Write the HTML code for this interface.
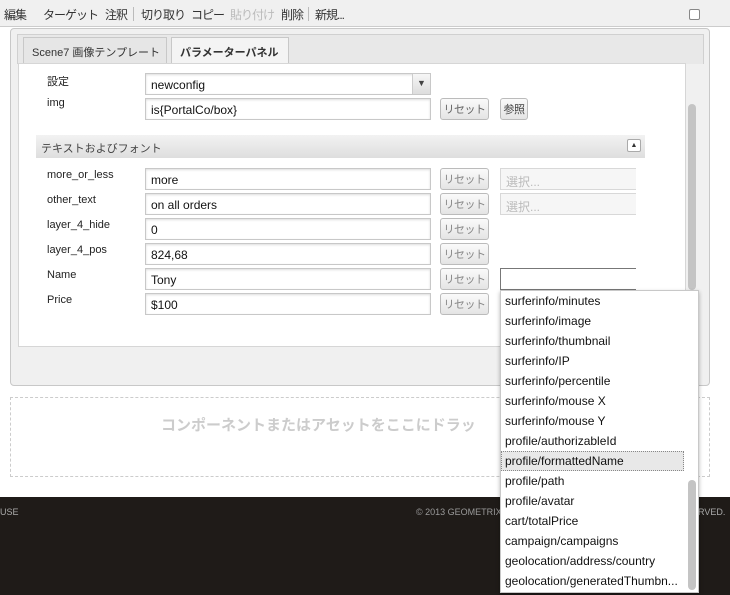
<!DOCTYPE html>
<html><head><meta charset="utf-8"><style>
*{box-sizing:border-box;margin:0;padding:0}
body{width:730px;height:595px;position:relative;overflow:hidden;background:#fff;font-family:"Liberation Sans","Noto Sans CJK JP",sans-serif;font-size:12px;color:#333}
.a{position:absolute}
.tb{left:0;top:0;width:730px;height:27px;background:#f0f0f0;border-bottom:1px solid #ccc}
.tb span{position:absolute;top:6px;font-size:12px;color:#333;white-space:nowrap;letter-spacing:-1px}
.sep{position:absolute;top:7px;width:1px;height:14px;background:#bbb}
.panel{left:10px;top:28px;width:700px;height:358px;background:#f0f0f0;border:1px solid #c8c8c8;border-radius:4px}
.tabbar{left:17px;top:34px;width:687px;height:30px;background:#e8e8e8;border:1px solid #d0d0d0;border-bottom:none}
.tab{top:37px;height:26px;border:1px solid #c8c8c8;border-bottom:none;background:#e6e6e6;font-size:11px;padding:6px 0 0 8px;color:#333;white-space:nowrap;overflow:hidden}
.content{left:18px;top:63px;width:668px;height:284px;background:#fff;border:1px solid #d6d6d6}
.lbl{left:47px;font-size:11px;color:#222}
.inp{left:145px;width:286px;height:22px;border:1px solid #c8c8c8;background:#fff;font-size:12px;padding:4px 5px;color:#111;box-shadow:inset 0 1px 2px #ddd}
.btn{left:440px;width:49px;height:22px;border:1px solid #bbb;border-radius:3px;background:linear-gradient(#fafafa,#e4e4e4);font-size:11px;color:#888;text-align:center;line-height:22px;white-space:nowrap;overflow:hidden;letter-spacing:-0.5px}
.sel{left:500px;width:136px;height:22px;border:1px solid #d8d8d8;border-right:none;background:#f6f6f6;color:#bbb;font-size:12px;padding:4px 5px}
.dd{left:500px;top:290px;width:199px;height:303px;background:#fff;border:1px solid #c8c8c8;box-shadow:0 2px 4px rgba(0,0,0,.3)}
.dd div{height:20px;padding:3px 0 0 4px;font-size:12px;color:#111;white-space:nowrap}
.footer{left:0;top:497px;width:730px;height:98px;background:#1f1b18}
</style></head><body>
<div class="a tb">
<span style="left:4px">編集</span><span style="left:43px">ターゲット</span><span style="left:105px">注釈</span>
<div class="sep" style="left:133px"></div>
<span style="left:141px">切り取り</span><span style="left:191px">コピー</span><span style="left:230px;color:#bbb">貼り付け</span><span style="left:281px">削除</span>
<div class="sep" style="left:308px"></div>
<span style="left:315px">新規...</span>
<div class="a" style="left:689px;top:9px;width:11px;height:11px;border:1px solid #888;border-radius:2px;background:#fff"></div>
</div>
<div class="a panel"></div>
<div class="a tabbar"></div>
<div class="a tab" style="left:23px;width:144px">Scene7 画像テンプレート</div>
<div class="a tab" style="left:171px;width:118px;background:#f4f4f4;font-weight:bold;height:27px">パラメーターパネル</div>
<div class="a content"></div>
<div class="a" style="left:686px;top:64px;width:12px;height:283px;background:#f0f0f0"></div>
<div class="a" style="left:688px;top:104px;width:8px;height:186px;background:#c4c4c4;border-radius:4px"></div>

<div class="a lbl" style="top:73px">設定</div>
<div class="a inp" style="top:73px;width:286px">newconfig</div>
<div class="a" style="left:412px;top:74px;width:18px;height:20px;background:linear-gradient(#f6f6f6,#ddd);border-left:1px solid #ccc;font-size:9px;text-align:center;padding-top:4px;color:#444">&#9660;</div>
<div class="a lbl" style="top:97px">img</div>
<div class="a inp" style="top:98px">is{PortalCo/box}</div>
<div class="a btn" style="top:98px;color:#666">リセット</div>
<div class="a btn" style="left:500px;width:28px;top:98px;color:#444">参照</div>

<div class="a" style="left:36px;top:135px;width:609px;height:23px;background:linear-gradient(#f2f2f2,#dedede);font-size:11px;padding:5px 5px;color:#444">テキストおよびフォント</div>
<div class="a" style="left:627px;top:139px;width:14px;height:13px;border:1px solid #aaa;border-radius:2px;background:#fff;font-size:7px;text-align:center;padding-top:2px;color:#333">&#9650;</div>

<div class="a lbl" style="top:169px">more_or_less</div>
<div class="a inp" style="top:168px">more</div><div class="a btn" style="top:168px">リセット</div><div class="a sel" style="top:168px">選択...</div>
<div class="a lbl" style="top:194px">other_text</div>
<div class="a inp" style="top:193px">on all orders</div><div class="a btn" style="top:193px">リセット</div><div class="a sel" style="top:193px">選択...</div>
<div class="a lbl" style="top:219px">layer_4_hide</div>
<div class="a inp" style="top:218px">0</div><div class="a btn" style="top:218px">リセット</div>
<div class="a lbl" style="top:244px">layer_4_pos</div>
<div class="a inp" style="top:243px">824,68</div><div class="a btn" style="top:243px">リセット</div>
<div class="a lbl" style="top:269px">Name</div>
<div class="a inp" style="top:268px">Tony</div><div class="a btn" style="top:268px">リセット</div>
<div class="a" style="left:500px;top:268px;width:136px;height:22px;border:1px solid #777;border-right:none;background:#fff"></div>
<div class="a lbl" style="top:294px">Price</div>
<div class="a inp" style="top:293px">$100</div><div class="a btn" style="top:293px">リセット</div>

<div class="a" style="left:10px;top:397px;width:700px;height:80px;border:1px dashed #ccc"></div>
<div class="a" style="left:161px;top:414px;font-size:15px;font-weight:bold;color:#ccc;white-space:nowrap">コンポーネントまたはアセットをここにドラッ</div>

<div class="a footer"></div>
<div class="a" style="left:0;top:507px;font-size:9px;color:#aaa">USE</div>
<div class="a" style="left:416px;top:507px;font-size:9px;color:#999">© 2013 GEOMETRIXX</div>
<div class="a" style="left:698px;top:507px;font-size:9px;color:#aaa">RVED.</div>

<div class="a dd">
<div>surferinfo/minutes</div><div>surferinfo/image</div><div>surferinfo/thumbnail</div><div>surferinfo/IP</div><div>surferinfo/percentile</div><div>surferinfo/mouse X</div><div>surferinfo/mouse Y</div><div>profile/authorizableId</div><div style="background:#e8e8e8;outline:1px dotted #888;outline-offset:-1px;margin-right:14px">profile/formattedName</div><div>profile/path</div><div>profile/avatar</div><div>cart/totalPrice</div><div>campaign/campaigns</div><div>geolocation/address/country</div><div>geolocation/generatedThumbn...</div>
</div>
<div class="a" style="left:688px;top:480px;width:8px;height:110px;background:#c4c4c4;border-radius:4px"></div>
</body></html>
